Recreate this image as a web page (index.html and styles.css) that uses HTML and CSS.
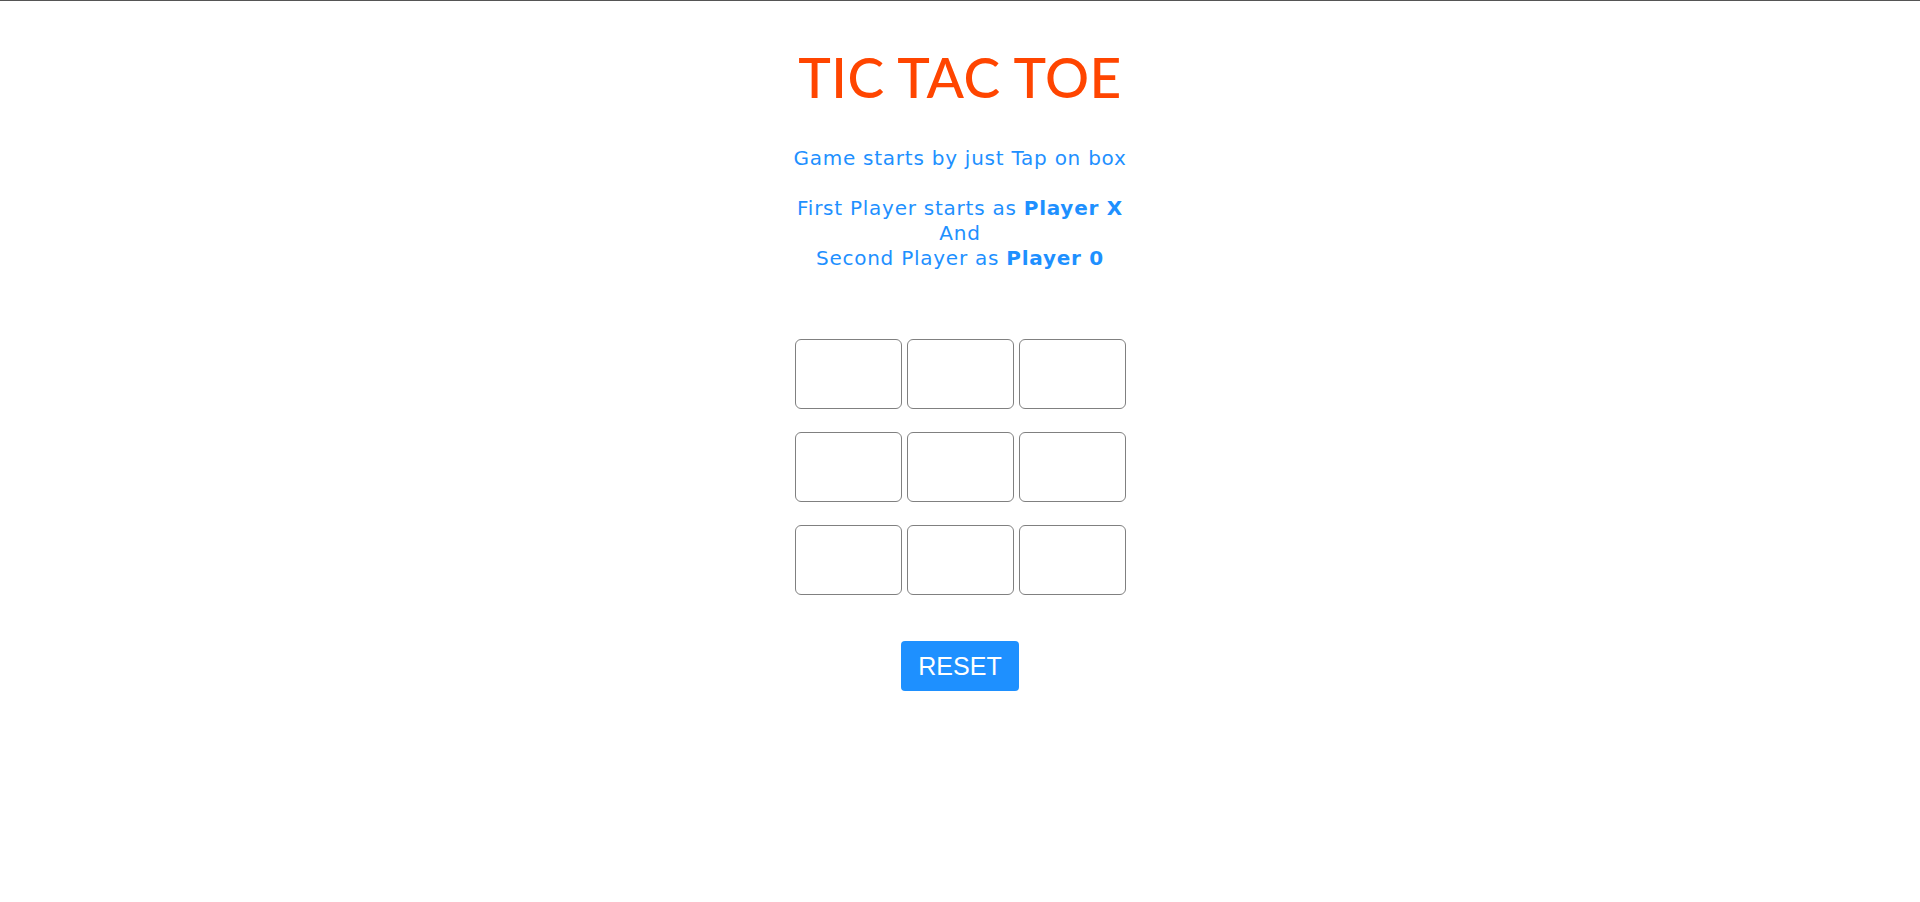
FILE: index.html
```html
<!DOCTYPE html>
<html>
<head>
<meta charset="utf-8">
<title>Tic Tac Toe</title>
<link rel="stylesheet" href="styles.css">
</head>
<body>
<div class="page">
  <h1 class="title">TIC TAC TOE</h1>
  <p class="info">Game starts by just Tap on box</p>
  <p class="info">First Player starts as <b>Player X</b><br>And<br>Second Player as <b>Player 0</b></p>
  <div class="board">
    <button class="cell"></button><button class="cell"></button><button class="cell"></button>
    <button class="cell"></button><button class="cell"></button><button class="cell"></button>
    <button class="cell"></button><button class="cell"></button><button class="cell"></button>
  </div>
  <button class="reset">RESET</button>
</div>
</body>
</html>
```
FILE: styles.css
```css
html, body {
  margin: 0;
  padding: 0;
  background: #fff;
}
body {
  border-top: 1px solid #555;
}
.page {
  display: flex;
  flex-direction: column;
  align-items: center;
  font-family: "DejaVu Sans", Verdana, sans-serif;
}
.title {
  margin: 41px 0 0 0;
  font-family: Lato, "Noto Sans", sans-serif;
  font-weight: 500;
  font-size: 55px;
  line-height: 70px;
  color: #ff4500;
  letter-spacing: 0.5px;
}
.info {
  margin: 34px 0 0 0;
  font-size: 20px;
  line-height: 25px;
  letter-spacing: 0.75px;
  color: #1e90ff;
  text-align: center;
}
.info + .info {
  margin-top: 25px;
}
.board {
  margin-top: 68px;
  display: grid;
  grid-template-columns: repeat(3, 107px);
  grid-auto-rows: 70px;
  column-gap: 5px;
  row-gap: 23px;
}
.cell {
  box-sizing: border-box;
  width: 107px;
  height: 70px;
  border: 1px solid #808080;
  border-radius: 6px;
  background: #fff;
  padding: 0;
}
.reset {
  margin-top: 46px;
  box-sizing: border-box;
  width: 118px;
  height: 50px;
  border: none;
  border-radius: 4px;
  background: #1e90ff;
  color: #fff;
  font-family: "Liberation Sans", Arial, sans-serif;
  font-size: 25px;
  padding: 0;
}
```
